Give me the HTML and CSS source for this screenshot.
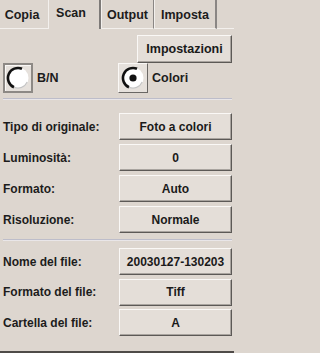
FILE: index.html
```html
<!DOCTYPE html>
<html>
<head>
<meta charset="utf-8">
<link rel="stylesheet" href="styles.css">
</head>
<body>
<div class="screen">
  <div class="tabs">
    <div class="tab tab-copia">Copia</div>
    <div class="tab tab-scan active">Scan</div>
    <div class="tab tab-output">Output</div>
    <div class="tab tab-imposta">Imposta</div>
    <div class="tab-rest"></div>
  </div>
  <div class="panel">
    <div class="toprow">
      <div class="btn btn-settings">Impostazioni</div>
    </div>
    <div class="radios">
      <div class="radio-item radio-bn">
        <div class="radio-box focused">
          <svg width="24" height="24" viewBox="0 0 24 24">
            <circle cx="12" cy="12" r="10.5" fill="#fff"/>
            <path d="M16 2.8 A10 10 0 1 0 8 21.2" fill="none" stroke="#111" stroke-width="2.6"/>
            <path d="M8 21.2 A10 10 0 0 0 21.2 16" fill="none" stroke="#c4c4c4" stroke-width="1.2"/>
          </svg>
        </div>
        <span class="radio-label">B/N</span>
      </div>
      <div class="radio-item radio-col">
        <div class="radio-box">
          <svg width="24" height="24" viewBox="0 0 24 24">
            <circle cx="12" cy="12" r="10.5" fill="#fff"/>
            <path d="M16 2.8 A10 10 0 1 0 8 21.2" fill="none" stroke="#111" stroke-width="2.6"/>
            <path d="M8 21.2 A10 10 0 0 0 21.2 16" fill="none" stroke="#c4c4c4" stroke-width="1.2"/>
            <circle cx="12" cy="12" r="3.6" fill="#111"/>
          </svg>
        </div>
        <span class="radio-label">Colori</span>
      </div>
    </div>
    <div class="sep sep-1"></div>
    <div class="group group-1">
      <div class="row"><span class="label">Tipo di originale:</span><div class="btn btn-val">Foto a colori</div></div>
      <div class="row"><span class="label">Luminosità:</span><div class="btn btn-val">0</div></div>
      <div class="row"><span class="label">Formato:</span><div class="btn btn-val">Auto</div></div>
      <div class="row"><span class="label">Risoluzione:</span><div class="btn btn-val">Normale</div></div>
    </div>
    <div class="sep sep-2"></div>
    <div class="group group-2">
      <div class="row"><span class="label">Nome del file:</span><div class="btn btn-val">20030127-130203</div></div>
      <div class="row"><span class="label">Formato del file:</span><div class="btn btn-val">Tiff</div></div>
      <div class="row"><span class="label">Cartella del file:</span><div class="btn btn-val">A</div></div>
    </div>
  </div>
</div>
</body>
</html>
```

FILE: styles.css
```css
html, body {
  margin: 0;
  padding: 0;
  background: #ddd6cf;
}
body {
  font-family: "Liberation Sans", Arial, sans-serif;
  font-size: 12px;
  font-weight: bold;
  color: #1c1c1c;
}
.screen {
  width: 234px;
  height: 353px;
  box-sizing: border-box;
  border-bottom: 2px solid #4f4b48;
  overflow: hidden;
}
.tabs {
  display: flex;
  height: 29px;
}
.tab {
  box-sizing: border-box;
  height: 29px;
  padding-top: 8px;
  text-align: center;
  font-size: 12.5px;
  border-bottom: 1px solid #f3f0ed;
}
.tab-copia {
  width: 49px;
  padding-right: 4px;
  border-right: 1px solid #f3f0ed;
}
.tab-scan {
  width: 52px;
  padding-top: 6px;
  padding-right: 6px;
  border-bottom: none;
  border-right: 2px solid #7d7a78;
}
.tab-output {
  width: 53px;
  border-left: 1px solid #f3f0ed;
  border-right: 1px solid #8a8684;
}
.tab-imposta {
  width: 63px;
  border-left: 1px solid #f3f0ed;
  border-right: 2px solid #8a8684;
}
.tab-rest {
  flex: 1;
  border-bottom: 1px solid #f3f0ed;
}
.panel {
  padding: 0 2px 0 3px;
}
.btn {
  box-sizing: border-box;
  background: #e4ded8;
  border-top: 1px solid #faf8f6;
  border-left: 1px solid #faf8f6;
  border-right: 1px solid #5c5956;
  border-bottom: 1px solid #5c5956;
  box-shadow: inset -1px -1px 0 #a9a49f;
  display: flex;
  align-items: center;
  justify-content: center;
  color: #1a1a1a;
}
.toprow {
  display: flex;
  justify-content: flex-end;
  margin-top: 6px;
}
.btn-settings {
  width: 95px;
  height: 28px;
  font-size: 12.5px;
}
.radios {
  display: flex;
  height: 30px;
}
.radio-item {
  display: flex;
  align-items: center;
}
.radio-bn {
  width: 115px;
}
.radio-box {
  box-sizing: border-box;
  width: 30px;
  height: 30px;
  background: #e6e1dc;
  border-top: 1px solid #faf8f6;
  border-left: 1px solid #faf8f6;
  border-right: 1px solid #6a6764;
  border-bottom: 1px solid #6a6764;
  display: flex;
  align-items: center;
  justify-content: center;
}
.radio-box.focused {
  border: 2px solid #8d8985;
  box-shadow: inset 1px 1px 0 #faf8f6;
}
.radio-label {
  margin-left: 4px;
  font-size: 12.5px;
}
.sep {
  height: 1px;
  background: #bdbdca;
  border-bottom: 1px solid #e9e6e8;
}
.sep-1 {
  margin-top: 5px;
}
.group-1 {
  padding-top: 13px;
}
.sep-2 {
  margin-top: 6px;
}
.group-2 {
  padding-top: 7px;
}
.row {
  display: flex;
  align-items: center;
  justify-content: space-between;
  height: 27px;
  margin-bottom: 4px;
}
.group-2 .row {
  margin-bottom: 3.5px;
}
.label {
  font-size: 12px;
}
.btn-val {
  width: 113px;
  height: 27px;
  font-size: 12px;
}
```
